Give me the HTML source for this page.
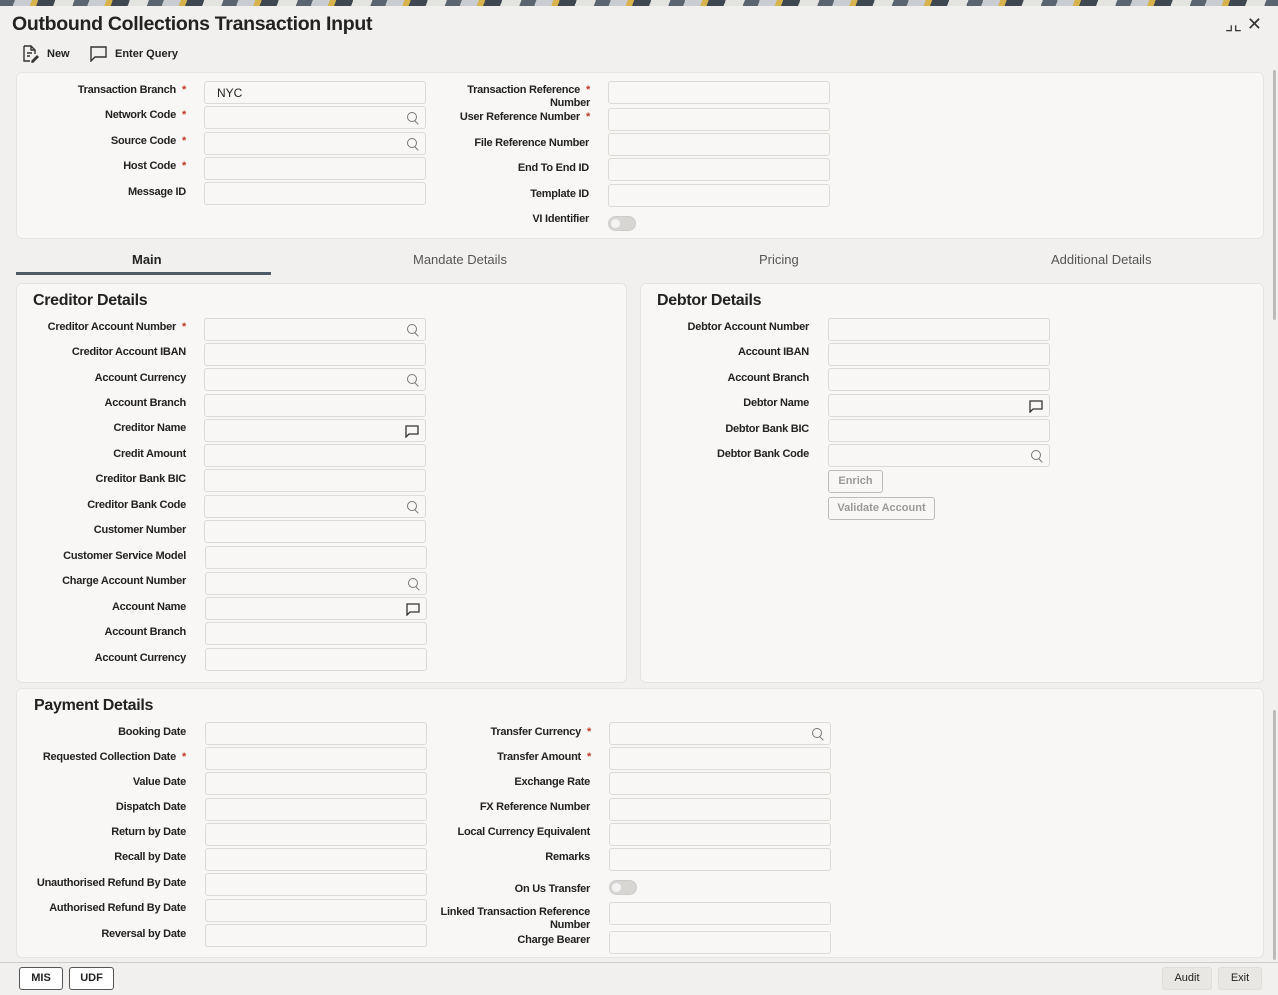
<!DOCTYPE html>
<html><head><meta charset="utf-8"><style>
*{box-sizing:border-box;margin:0;padding:0}
body{width:1278px;height:995px;position:relative;overflow:hidden;background:#f1f0ee;font-family:"Liberation Sans",sans-serif;color:#222}
.top{position:absolute;left:0;top:0;width:1278px;height:6px;background:repeating-linear-gradient(110deg,#5a6570 0 14px,#c9ccd0 14px 30px,#d8b24a 30px 36px,#3f4850 36px 52px,#e3e3e0 52px 70px)}
.p{position:absolute;background:#f8f7f5;border:1px solid #e6e4e1;border-radius:6px}
.l{position:absolute;margin-top:1px;font-size:11px;font-weight:bold;letter-spacing:-.25px;text-align:right;white-space:nowrap;color:#222;line-height:13px}
.l i{font-style:normal;color:#c0392b;margin-left:6px}
.i{position:absolute;width:222px;height:23px;background:#f8f7f5;border:1px solid #dcdad6;border-radius:3px}
.s::after{content:"";position:absolute;right:8px;top:5px;width:8px;height:8px;border:1.3px solid #777;border-radius:50%}
.s::before{content:"";position:absolute;right:6px;top:15px;width:5px;height:1.3px;background:#777;transform:rotate(45deg)}
.c svg{position:absolute;right:6px;top:5px}
.h{position:absolute;font-size:16px;font-weight:bold;color:#222;letter-spacing:-.3px}
.tab{position:absolute;top:252px;font-size:13px;color:#555}
.tg{position:absolute;width:28px;height:15px;border-radius:8px;background:#d8d6d3;border:1px solid #ccc}
.tg::after{content:"";position:absolute;left:2px;top:2px;width:9px;height:9px;border-radius:50%;background:#f3f3f3}
.b{position:absolute;height:23px;border:1px solid #555;border-radius:3px;background:#fff;font-size:11px;font-weight:bold;text-align:center;line-height:21px}
.gb{position:absolute;height:23px;border:1px solid #bbb;border-radius:3px;font-size:11px;font-weight:bold;color:#999;text-align:center;line-height:21px}
</style></head><body>
<div class="top"></div>
<div style="position:absolute;left:12px;top:13px;font-size:19.5px;font-weight:bold;letter-spacing:-.3px">Outbound Collections Transaction Input</div>
<div style="position:absolute;right:16px;top:14px;font-size:18px;color:#333">⌟⌞&nbsp;✕</div>
<svg style="position:absolute;left:21px;top:45px" width="18" height="18" viewBox="0 0 18 18" fill="none" stroke="#333" stroke-width="1.4"><path d="M3 1h7l4 4v4M3 1v15h6M10 1v4h4M6 8h5M6 11h3M11 16l5-5 1 1-5 5h-1z"/></svg>
<div style="position:absolute;left:47px;top:48px;font-size:11px;font-weight:bold">New</div>
<svg style="position:absolute;left:90px;top:46px" width="17" height="16" viewBox="0 0 17 16" fill="none" stroke="#333" stroke-width="1.4"><path d="M1 1h15v10H5l-4 4z"/></svg>
<div style="position:absolute;left:115px;top:48px;font-size:11px;font-weight:bold">Enter Query</div>

<div class="p" style="left:16px;top:72px;width:1248px;height:167px"></div>
<div class="l" style="right:1092px;top:83px">Transaction Branch<i>*</i></div>
<div class="i" style="left:204px;top:81px"><span style="position:absolute;left:12px;top:4px;font-size:12px">NYC</span></div>
<div class="l" style="right:1092px;top:108px">Network Code<i>*</i></div><div class="i s" style="left:204px;top:106px"></div>
<div class="l" style="right:1092px;top:134px">Source Code<i>*</i></div><div class="i s" style="left:204px;top:132px"></div>
<div class="l" style="right:1092px;top:159px">Host Code<i>*</i></div><div class="i" style="left:204px;top:157px"></div>
<div class="l" style="right:1092px;top:185px">Message ID</div><div class="i" style="left:204px;top:182px"></div>
<div class="l" style="right:688px;top:83px">Transaction Reference<i>*</i><br><span style="margin-right:0">Number</span></div><div class="i" style="left:608px;top:81px"></div>
<div class="l" style="right:688px;top:110px">User Reference Number<i>*</i></div><div class="i" style="left:608px;top:108px"></div>
<div class="l" style="right:689px;top:136px">File Reference Number</div><div class="i" style="left:608px;top:133px"></div>
<div class="l" style="right:689px;top:161px">End To End ID</div><div class="i" style="left:608px;top:158px"></div>
<div class="l" style="right:689px;top:187px">Template ID</div><div class="i" style="left:608px;top:184px"></div>
<div class="l" style="right:689px;top:212px">VI Identifier</div><div class="tg" style="left:608px;top:216px"></div>

<div class="tab" style="left:132px;color:#222;font-weight:bold">Main</div>
<div style="position:absolute;left:16px;top:272px;width:255px;height:3px;background:#4e5a68"></div>
<div class="tab" style="left:413px">Mandate Details</div>
<div class="tab" style="left:759px">Pricing</div>
<div class="tab" style="left:1051px">Additional Details</div>

<div class="p" style="left:16px;top:283px;width:611px;height:400px"></div>
<div class="h" style="left:33px;top:292px">Creditor Details</div>
<div class="p" style="left:640px;top:283px;width:624px;height:400px"></div>
<div class="h" style="left:657px;top:292px">Debtor Details</div>

<div class="l" style="right:1092px;top:320px">Creditor Account Number<i>*</i></div><div class="i s" style="left:204px;top:318px"></div>
<div class="l" style="right:1092px;top:345px">Creditor Account IBAN</div><div class="i" style="left:204px;top:343px"></div>
<div class="l" style="right:1092px;top:371px">Account Currency</div><div class="i s" style="left:204px;top:368px"></div>
<div class="l" style="right:1092px;top:396px">Account Branch</div><div class="i" style="left:204px;top:394px"></div>
<div class="l" style="right:1092px;top:421px">Creditor Name</div><div class="i c" style="left:204px;top:419px"><svg width="14" height="13" viewBox="0 0 14 13" fill="none" stroke="#333" stroke-width="1.3"><path d="M1 1h12v8H4l-3 3z"/></svg></div>
<div class="l" style="right:1092px;top:447px">Credit Amount</div><div class="i" style="left:204px;top:444px"></div>
<div class="l" style="right:1092px;top:472px">Creditor Bank BIC</div><div class="i" style="left:204px;top:469px"></div>
<div class="l" style="right:1092px;top:498px">Creditor Bank Code</div><div class="i s" style="left:204px;top:495px"></div>
<div class="l" style="right:1092px;top:523px">Customer Number</div><div class="i" style="left:204px;top:520px"></div>
<div class="l" style="right:1092px;top:549px">Customer Service Model</div><div class="i" style="left:205px;top:546px"></div>
<div class="l" style="right:1092px;top:574px">Charge Account Number</div><div class="i s" style="left:205px;top:572px"></div>
<div class="l" style="right:1092px;top:600px">Account Name</div><div class="i c" style="left:205px;top:597px"><svg width="14" height="13" viewBox="0 0 14 13" fill="none" stroke="#333" stroke-width="1.3"><path d="M1 1h12v8H4l-3 3z"/></svg></div>
<div class="l" style="right:1092px;top:625px">Account Branch</div><div class="i" style="left:205px;top:622px"></div>
<div class="l" style="right:1092px;top:651px">Account Currency</div><div class="i" style="left:205px;top:648px"></div>

<div class="l" style="right:469px;top:320px">Debtor Account Number</div><div class="i" style="left:828px;top:318px"></div>
<div class="l" style="right:469px;top:345px">Account IBAN</div><div class="i" style="left:828px;top:343px"></div>
<div class="l" style="right:469px;top:371px">Account Branch</div><div class="i" style="left:828px;top:368px"></div>
<div class="l" style="right:469px;top:396px">Debtor Name</div><div class="i c" style="left:828px;top:394px"><svg width="14" height="13" viewBox="0 0 14 13" fill="none" stroke="#333" stroke-width="1.3"><path d="M1 1h12v8H4l-3 3z"/></svg></div>
<div class="l" style="right:469px;top:422px">Debtor Bank BIC</div><div class="i" style="left:828px;top:419px"></div>
<div class="l" style="right:469px;top:447px">Debtor Bank Code</div><div class="i s" style="left:828px;top:444px"></div>
<div class="gb" style="left:828px;top:470px;width:55px">Enrich</div>
<div class="gb" style="left:828px;top:497px;width:107px">Validate Account</div>

<div class="p" style="left:16px;top:688px;width:1248px;height:270px"></div>
<div class="h" style="left:34px;top:697px">Payment Details</div>
<div class="l" style="right:1092px;top:725px">Booking Date</div><div class="i" style="left:205px;top:722px"></div>
<div class="l" style="right:1092px;top:750px">Requested Collection Date<i>*</i></div><div class="i" style="left:205px;top:747px"></div>
<div class="l" style="right:1092px;top:775px">Value Date</div><div class="i" style="left:205px;top:772px"></div>
<div class="l" style="right:1092px;top:800px">Dispatch Date</div><div class="i" style="left:205px;top:798px"></div>
<div class="l" style="right:1092px;top:825px">Return by Date</div><div class="i" style="left:205px;top:823px"></div>
<div class="l" style="right:1092px;top:850px">Recall by Date</div><div class="i" style="left:205px;top:848px"></div>
<div class="l" style="right:1092px;top:876px">Unauthorised Refund By Date</div><div class="i" style="left:205px;top:873px"></div>
<div class="l" style="right:1092px;top:901px">Authorised Refund By Date</div><div class="i" style="left:205px;top:899px"></div>
<div class="l" style="right:1092px;top:927px">Reversal by Date</div><div class="i" style="left:205px;top:924px"></div>

<div class="l" style="right:687px;top:725px">Transfer Currency<i>*</i></div><div class="i s" style="left:609px;top:722px"></div>
<div class="l" style="right:687px;top:750px">Transfer Amount<i>*</i></div><div class="i" style="left:609px;top:747px"></div>
<div class="l" style="right:688px;top:775px">Exchange Rate</div><div class="i" style="left:609px;top:772px"></div>
<div class="l" style="right:688px;top:800px">FX Reference Number</div><div class="i" style="left:609px;top:798px"></div>
<div class="l" style="right:688px;top:825px">Local Currency Equivalent</div><div class="i" style="left:609px;top:823px"></div>
<div class="l" style="right:688px;top:850px">Remarks</div><div class="i" style="left:609px;top:848px"></div>
<div class="l" style="right:688px;top:882px">On Us Transfer</div><div class="tg" style="left:609px;top:880px"></div>
<div class="l" style="right:688px;top:905px">Linked Transaction Reference<br>Number</div><div class="i" style="left:609px;top:902px"></div>
<div class="l" style="right:688px;top:933px">Charge Bearer</div><div class="i" style="left:609px;top:931px"></div>

<div style="position:absolute;left:0;top:962px;width:1278px;height:1px;background:#ccc"></div>
<div class="b" style="left:19px;top:967px;width:44px">MIS</div>
<div class="b" style="left:69px;top:967px;width:45px">UDF</div>
<div class="b" style="left:1162px;top:967px;width:50px;border-color:#e0dedb;background:#e8e7e4;font-weight:normal">Audit</div>
<div class="b" style="left:1218px;top:967px;width:44px;border-color:#e0dedb;background:#e8e7e4;font-weight:normal">Exit</div>
<div style="position:absolute;left:1273px;top:70px;width:3px;height:250px;background:#bbb;border-radius:2px"></div>
<div style="position:absolute;left:1273px;top:710px;width:3px;height:250px;background:#bbb;border-radius:2px"></div>
</body></html>
